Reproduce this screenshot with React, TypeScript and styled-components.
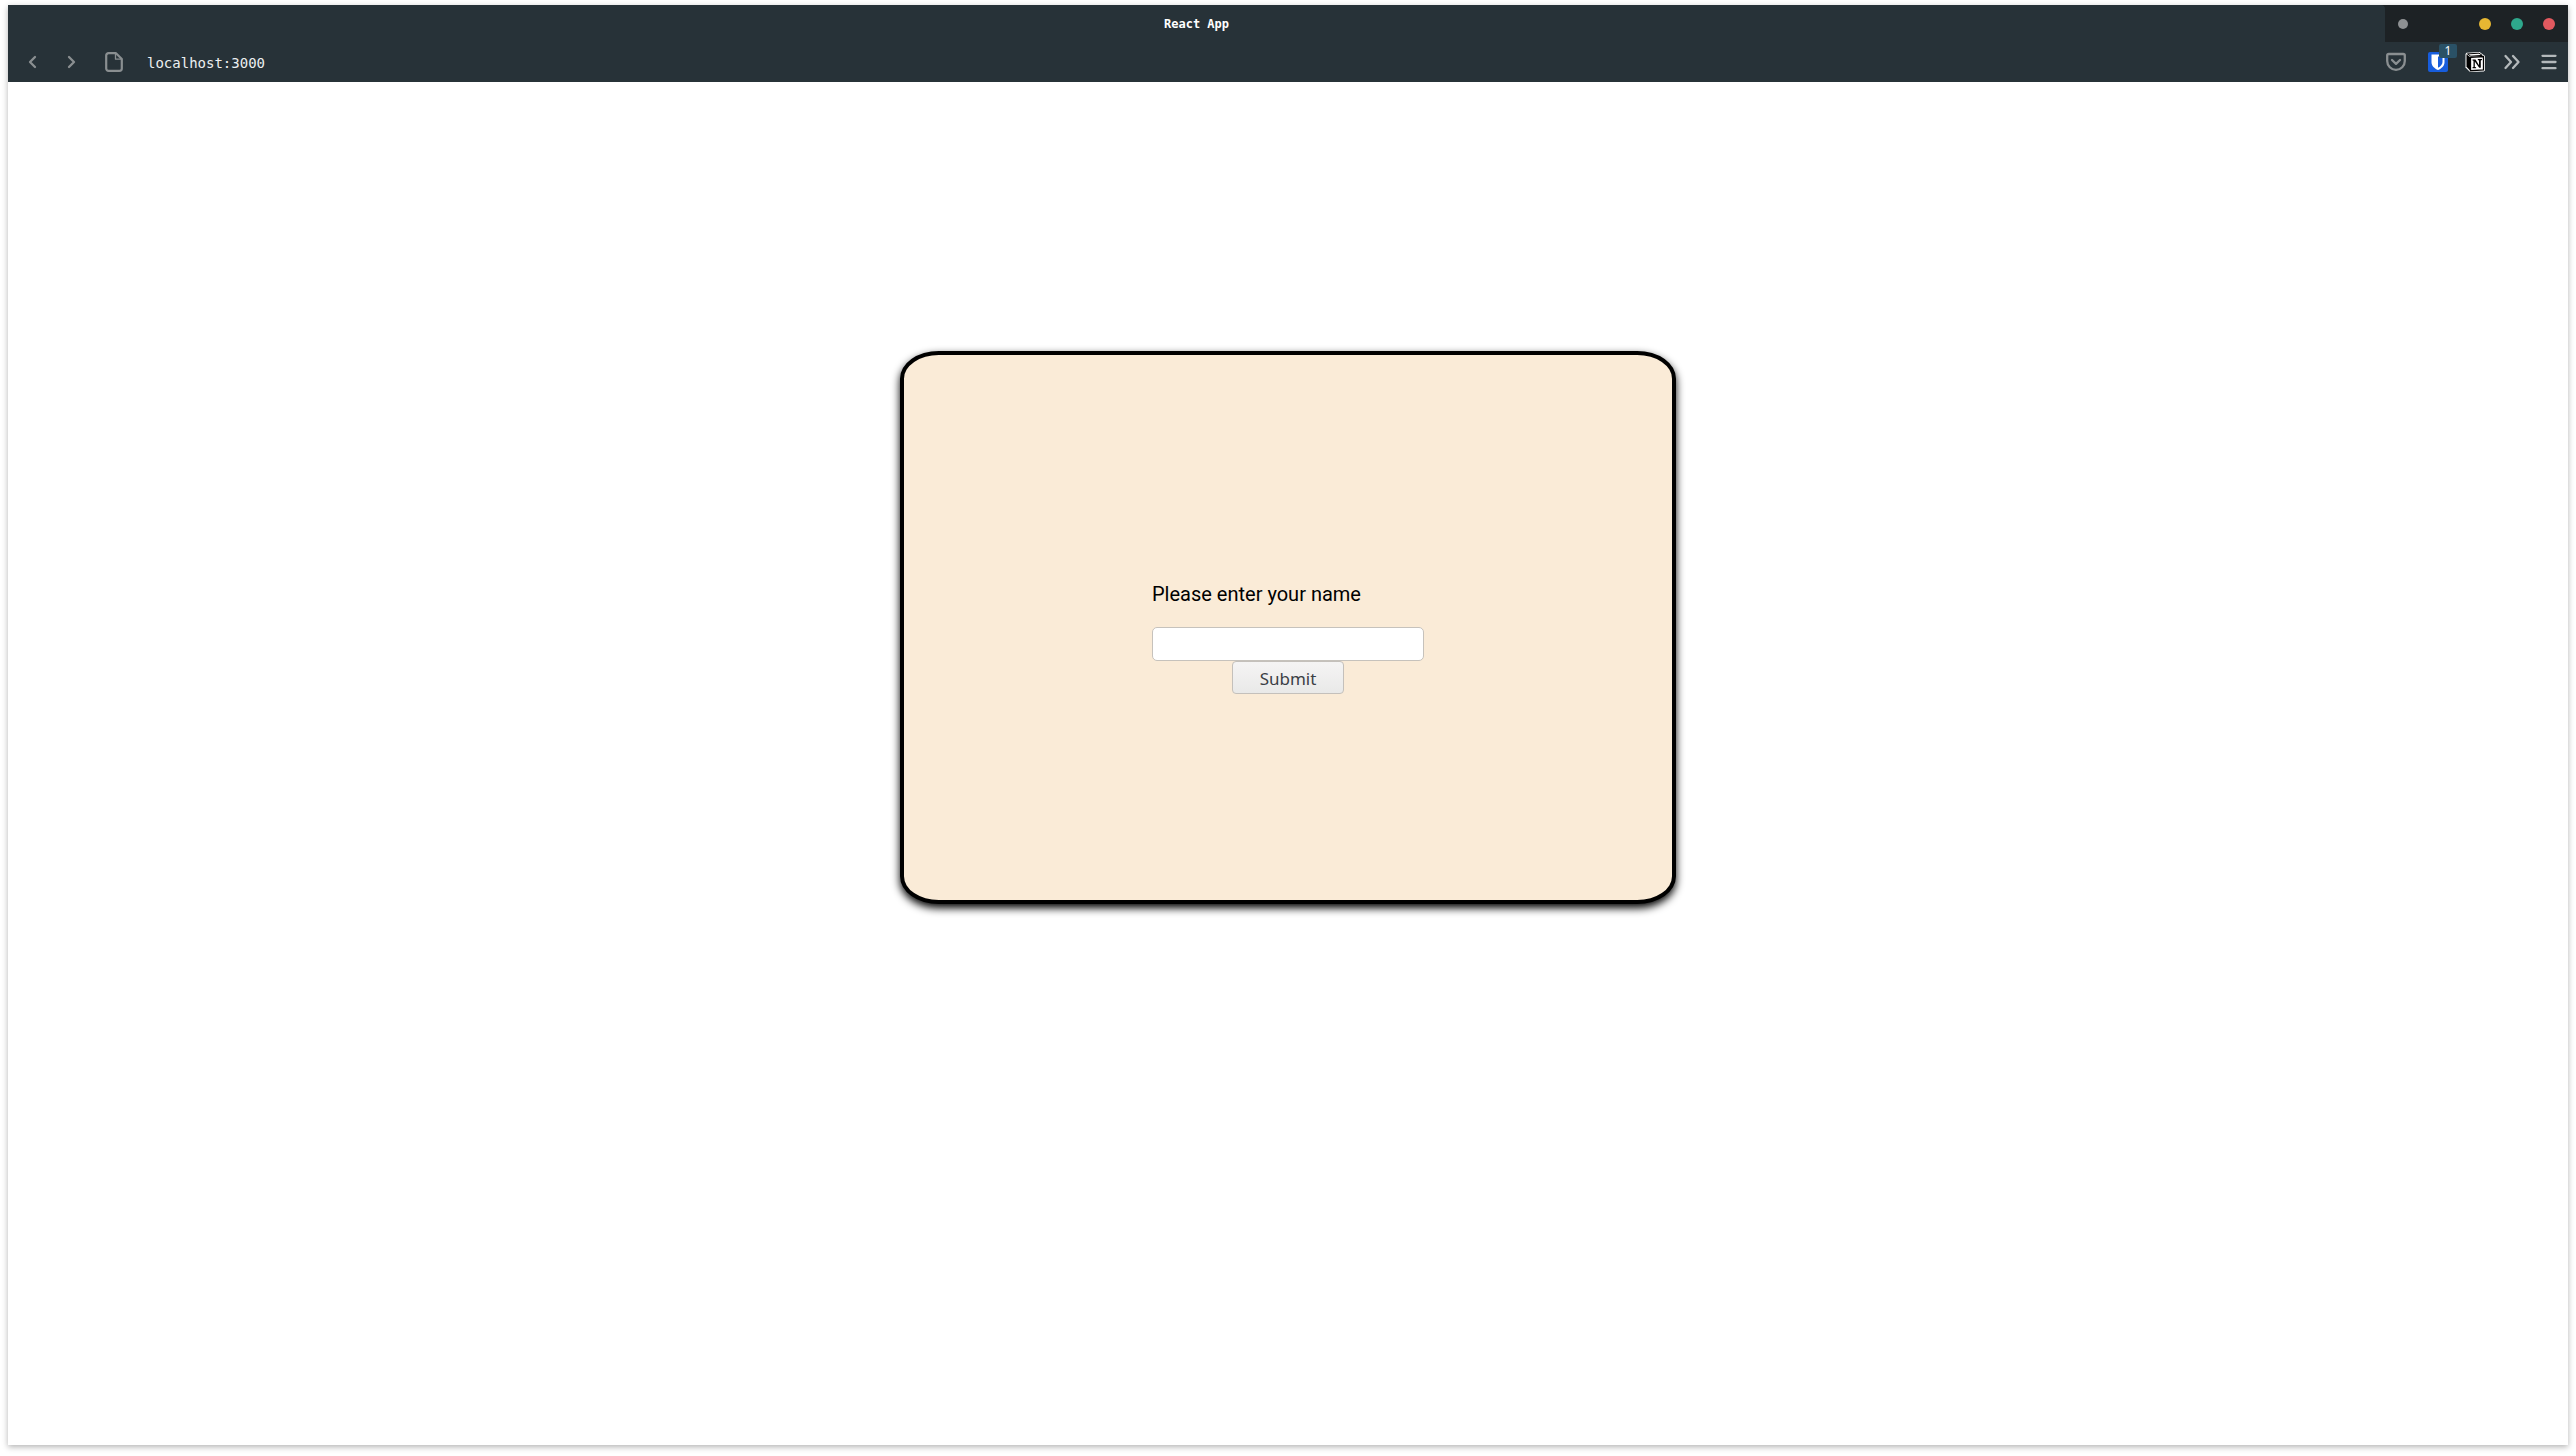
import React from "react";
import styled, { createGlobalStyle } from "styled-components";

const GlobalStyle = createGlobalStyle`
  *, *::before, *::after { box-sizing: border-box; }
  html, body, #root { height: 100%; }
  body { margin: 0; background: #fff; font-family: Roboto, sans-serif; }
`;

const Desktop = styled.div`
  display: flex;
  height: 100%;
  padding: 5px 8px 11px;
`;

const Window = styled.div`
  flex: 1;
  display: flex;
  flex-direction: column;
  background: #fff;
  box-shadow: 0 2px 6px rgba(0, 0, 0, 0.3);
`;

const TitleBar = styled.header`
  display: grid;
  grid-template-columns: 1fr 183px;
  height: 37px;
  background: #1d2225;
`;

const Title = styled.h1`
  margin: 0;
  padding-top: 2px;
  background: #273238;
  border-radius: 0 4px 0 0;
  color: #fff;
  font: bold 12px/35px "DejaVu Sans Mono", monospace;
  text-align: center;
`;

const WindowControls = styled.div`
  display: flex;
  align-items: center;
  gap: 20px;
  padding: 0 13px;
`;

const Dot = styled.button<{ $color: string; $small?: boolean }>`
  width: ${(p) => (p.$small ? 10 : 12)}px;
  height: ${(p) => (p.$small ? 10 : 12)}px;
  margin: 0 ${(p) => (p.$small ? "auto" : "0")} 0 0;
  padding: 0;
  border: 0;
  border-radius: 50%;
  background: ${(p) => p.$color};
`;

const NavBar = styled.nav`
  display: flex;
  align-items: center;
  justify-content: space-between;
  height: 40px;
  padding: 0 9px 0 14px;
  background: #273238;
`;

const NavGroup = styled.div<{ $gap: number }>`
  display: flex;
  align-items: center;
  gap: ${(p) => p.$gap}px;
`;

const IconButton = styled.button<{ $margin?: string }>`
  position: relative;
  display: flex;
  margin: ${(p) => p.$margin ?? "0"};
  padding: 0;
  border: 0;
  background: none;
`;

const Badge = styled.span`
  position: absolute;
  top: -8px;
  left: 11px;
  width: 18px;
  height: 14px;
  border-radius: 2px;
  background: #2a5166;
  color: #fff;
  font: 12px/14px "Noto Sans", sans-serif;
  text-align: center;
`;

const Address = styled.input`
  width: 400px;
  padding: 2px 0 0;
  border: 0;
  outline: 0;
  background: none;
  color: #eceff1;
  font: 14px/20px "DejaVu Sans Mono", monospace;
`;

const Page = styled.main`
  flex: 1;
  display: flex;
  flex-direction: column;
  align-items: center;
`;

const Card = styled.section`
  display: flex;
  align-items: center;
  justify-content: center;
  box-sizing: content-box;
  width: 30%;
  height: 40%;
  margin-top: 269px;
  border: 4px solid #000;
  border-radius: 5%;
  background: #faebd7;
  box-shadow: 0 4px 8px #000;
`;

const Form = styled.form`
  display: flex;
  flex-direction: column;
  width: 272px;
  padding-top: 21px;
`;

const Label = styled.label`
  margin-bottom: 21px;
  color: #000;
  font-size: 20px;
  line-height: 24px;
`;

const NameInput = styled.input`
  height: 34px;
  padding: 0 8px;
  border: 1px solid #c6c2bc;
  border-radius: 5px;
  background: #fff;
  font: 17px "Noto Sans", sans-serif;
`;

const Submit = styled.button`
  align-self: center;
  width: 112px;
  height: 33px;
  padding: 2px 0 0;
  border: 1px solid #c4c0bb;
  border-radius: 4px;
  background: linear-gradient(#f5f4f4, #e9e9e8);
  color: #3b4045;
  font: 17px/29px "Noto Sans", sans-serif;
`;

const Stroke = ({ d, color = "#8a8f91" }: { d: string; color?: string }) => (
  <svg width={20} height={20} viewBox="0 0 20 20" fill="none" stroke={color} strokeWidth={2.3} strokeLinecap="round" strokeLinejoin="round">
    <path d={d} />
  </svg>
);

export default function App() {
  return (
    <Desktop>
      <GlobalStyle />
      <Window>
        <TitleBar>
          <Title>React App</Title>
          <WindowControls>
            <Dot type="button" aria-label="Pin" $color="#8e9193" $small />
            <Dot type="button" aria-label="Minimize" $color="#e7b732" />
            <Dot type="button" aria-label="Maximize" $color="#2ea88c" />
            <Dot type="button" aria-label="Close" $color="#e2595f" />
          </WindowControls>
        </TitleBar>
        <NavBar>
          <NavGroup $gap={19}>
            <IconButton type="button" aria-label="Back"><Stroke d="M13 5 8 10l5 5" /></IconButton>
            <IconButton type="button" aria-label="Forward"><Stroke d="M8 5 13 10l-5 5" /></IconButton>
            <IconButton type="button" aria-label="Site information" $margin="0 4px">
              <svg width="20" height="20" viewBox="0 0 20 20" fill="none" stroke="#8a8f91" strokeLinejoin="round">
                <path strokeWidth="2.2" d="M4.500 1.200H12L17.800 7V16.500a2.300 2.300 0 0 1-2.300 2.300h-11a2.300 2.300 0 0 1-2.300-2.300v-13a2.300 2.300 0 0 1 2.300-2.300z" />
                <path strokeWidth="1.300" d="M11.500 1.500v5.700h5.800" />
              </svg>
            </IconButton>
            <Address type="text" aria-label="Address" defaultValue="localhost:3000" />
          </NavGroup>
          <NavGroup $gap={17}>
            <IconButton type="button" aria-label="Save to Pocket" $margin="0 5px 0 0">
              <Stroke d="M2.800 2h14.400Q18.800 2 18.800 3.600V9a8.800 8.800 0 0 1-17.600 0V3.600Q1.200 2 2.800 2zM6 8l4 3.800L14 8" />
            </IconButton>
            <IconButton type="button" aria-label="Password manager, 1 login">
              <svg width="20" height="20" viewBox="0 0 20 20">
                <rect width="20" height="20" rx="2" fill="#175ddc" />
                <path d="M3.500 2.500h13V10c0 4-3 6.500-6.500 8-3.500-1.500-6.500-4-6.500-8z" fill="#fff" />
                <path d="M10 4.500h4.500V10c0 2.500-2 4.500-4.500 5.800z" fill="#175ddc" />
              </svg>
              <Badge>1</Badge>
            </IconButton>
            <IconButton type="button" aria-label="Notion clipper">
              <svg width="20" height="20" viewBox="0 0 20 20">
                <path d="M1.500.8 14.500 0 20 4V18.500L18.800 19.500 5 20 .5 15.500V2z" fill="#fff" />
                <path d="M1.500 2.300 5 5V18.500L1.500 14.800z" fill="#000" />
                <path d="M2.500 1.900 14 1.200l3.200 2.200L5.800 4.200z" fill="#fff" stroke="#000" strokeWidth="1" />
                <path d="M5.500 5.300 18.500 4.500V17.800L5.500 18.700z" fill="#fff" stroke="#000" strokeWidth="1.300" />
                <path d="M7.500 7.500h3l3.500 5.700V8.500l-1.200-.4V7H17v.9l-1.200.5v7.400h-1.600L9.800 9.600v5.300l1.300.4v.9H7.500v-.9l1-.4V8.800l-1-.4z" fill="#000" />
              </svg>
            </IconButton>
            <IconButton type="button" aria-label="More tools"><Stroke color="#b4b9bb" d="M3.500 4 9 10l-5.500 6M11 4 16.500 10l-5.500 6" /></IconButton>
            <IconButton type="button" aria-label="Menu"><Stroke color="#b4b9bb" d="M3.500 3.800h13M3.500 10h13M3.500 16.200h13" /></IconButton>
          </NavGroup>
        </NavBar>
        <Page>
          <Card>
            <Form onSubmit={(e) => e.preventDefault()}>
              <Label htmlFor="name">Please enter your name</Label>
              <NameInput id="name" type="text" />
              <Submit type="submit">Submit</Submit>
            </Form>
          </Card>
        </Page>
      </Window>
    </Desktop>
  );
}
